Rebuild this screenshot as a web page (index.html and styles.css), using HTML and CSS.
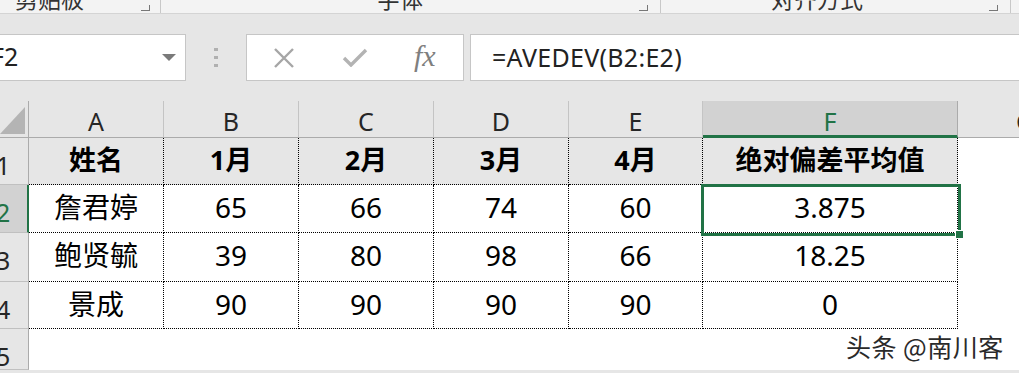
FILE: index.html
```html
<!DOCTYPE html>
<html lang="zh-CN">
<head>
<meta charset="utf-8">
<link rel="stylesheet" href="styles.css">
</head>
<body>
<div class="app">
  <div class="ribbon">
    <div class="group g1"><span class="glabel">剪贴板</span><span class="launch"></span></div>
    <div class="group g2"><span class="glabel">字体</span><span class="launch"></span></div>
    <div class="group g3"><span class="glabel">对齐方式</span><span class="launch"></span></div>
  </div>
  <div class="fbar">
    <div class="namebox"><span class="nametext">F2</span><span class="dd"></span></div>
    <div class="grip"><i></i><i></i><i></i></div>
    <div class="btns">
      <svg class="ico" width="24" height="20" viewBox="0 0 24 20"><path d="M3 1 L21 19 M21 1 L3 19" stroke="#a6a6a6" stroke-width="2.4" fill="none"/></svg>
      <svg class="ico" width="26" height="20" viewBox="0 0 26 20"><path d="M2 11 L9 18 L24 3" stroke="#b3b3b3" stroke-width="3.4" fill="none"/></svg>
      <span class="fx">fx</span>
    </div>
    <div class="formula">=AVEDEV(B2:E2)</div>
  </div>
  <div class="sheet">
    <div class="corner"><span class="tri"></span></div>
    <div class="ch">A</div><div class="ch">B</div><div class="ch">C</div><div class="ch">D</div><div class="ch">E</div><div class="ch sel">F</div><div class="ch last">G</div>

    <div class="rh">1</div>
    <div class="c h">姓名</div><div class="c h">1月</div><div class="c h">2月</div><div class="c h">3月</div><div class="c h">4月</div><div class="c h">绝对偏差平均值</div><div class="e"></div>

    <div class="rh selr">2</div>
    <div class="c">詹君婷</div><div class="c">65</div><div class="c">66</div><div class="c">74</div><div class="c">60</div><div class="c">3.875</div><div class="e"></div>

    <div class="rh">3</div>
    <div class="c">鲍贤毓</div><div class="c">39</div><div class="c">80</div><div class="c">98</div><div class="c">66</div><div class="c">18.25</div><div class="e"></div>

    <div class="rh">4</div>
    <div class="c">景成</div><div class="c">90</div><div class="c">90</div><div class="c">90</div><div class="c">90</div><div class="c">0</div><div class="e"></div>

    <div class="rh">5</div>
    <div class="e"></div><div class="e"></div><div class="e"></div><div class="e"></div><div class="e"></div><div class="e"></div><div class="e"></div>

    <div class="selbox"><span class="handle"></span></div>
    <div class="mark">头条 @南川客</div>
  </div>
</div>
</body>
</html>
```
FILE: styles.css
```css
* { box-sizing: border-box; }
html, body { margin: 0; padding: 0; }
body {
  width: 1019px; height: 373px; overflow: hidden;
  background: #e6e6e6;
  font-family: "Noto Sans", "Noto Sans CJK SC", sans-serif;
}
.app { width: 1019px; height: 373px; overflow: hidden; }

.ribbon {
  height: 14px; background: #f3f3f3;
  border-bottom: 1px solid #d4d4d4;
  display: flex; overflow: hidden;
}
.group { position: relative; height: 13px; border-right: 1px solid #c8c8c8; overflow: hidden; }
.g1 { width: 161px; }
.g2 { width: 500px; }
.g3 { width: 350px; }
.glabel {
  position: absolute; top: -14px;
  font-family: "Noto Sans CJK SC", sans-serif;
  font-size: 23px; line-height: 24px; color: #333;
}
.g1 .glabel { left: 15px; }
.g2 .glabel { left: 216px; }
.g3 .glabel { left: 110px; }
.launch {
  position: absolute; bottom: 2px; width: 9px; height: 6px;
  border-right: 1px solid #777; border-bottom: 1px solid #777;
}
.g1 .launch { right: 10px; }
.g2 .launch { right: 12px; }
.g3 .launch { right: 12px; }

.fbar {
  margin-top: 20px; height: 47px;
  display: flex; align-items: stretch;
}
.namebox {
  width: 187px; margin-left: -1px; background: #fff;
  border: 1px solid #c6c6c6; position: relative; overflow: hidden;
}
.nametext {
  position: absolute; left: -9px; top: 6px;
  font-size: 25px; line-height: 30px; color: #222;
}
.dd {
  position: absolute; left: 162px; top: 19px;
  border-left: 7px solid transparent; border-right: 7px solid transparent;
  border-top: 7px solid #7a7a7a;
}
.grip {
  width: 60px; display: flex; flex-direction: column; align-items: center;
  justify-content: center; gap: 5px;
}
.grip i { display: block; width: 4px; height: 3px; background: #b0b0b0; }
.btns {
  width: 218px; background: #fff; border: 1px solid #c6c6c6;
  display: flex; align-items: center; padding-left: 25px;
}
.btns .ico:nth-child(1) { margin-right: 46px; }
.btns .ico:nth-child(2) { margin-right: 46px; margin-top: -2px; }
.fx {
  font-family: "Liberation Serif", "DejaVu Serif", serif; font-style: italic;
  font-size: 30px; color: #7f7f7f; line-height: 30px; margin-top: -4px;
}
.formula {
  flex: 1; margin-left: 6px; background: #fff; border: 1px solid #c6c6c6;
  border-right: none;
  font-size: 25px; line-height: 44px; padding-left: 21px; color: #222;
  letter-spacing: 0.3px;
}

.sheet {
  position: relative;
  margin-top: 20px;
  display: grid;
  grid-template-columns: 29px 135px 135px 135px 135px 134px 255px 1fr;
  grid-template-rows: 37px 47px 48px 49px 47px 41px;
  background: #fff;
}
.corner { background: #e6e6e6; border-right: 1px solid #ababab; border-bottom: 1px solid #ababab; position: relative; }
.tri {
  position: absolute; right: 3px; bottom: 3px;
  border-left: 25px solid transparent; border-bottom: 27px solid #b4b4b4;
}
.ch {
  background: #e6e6e6; border-right: 1px solid #c4c4c4; border-bottom: 1px solid #ababab;
  text-align: center; font-size: 25px; line-height: 40px; color: #262626;
}
.ch.sel { background: #d2d2d2; color: #217346; border-bottom: 3px solid #217346; border-right-color: #ababab; }
.ch.last { border-right: none; text-align: left; padding-left: 58px; overflow: hidden; white-space: nowrap; }
.rh {
  background: #e6e6e6; border-right: 1px solid #ababab; border-bottom: 1px solid #c0c0c0;
  font-size: 25px; line-height: 34px; padding-top: 10px; color: #262626;
  text-indent: -4px; overflow: hidden;
}
.rh.selr { background: #d2d2d2; color: #217346; border-right: 2px solid #217346; }
.c {
  border-right: 1px dotted #000; border-bottom: 1px dotted #000;
  text-align: center; font-size: 28px; line-height: 44px; color: #000;
  font-family: "Noto Sans", "Noto Sans CJK SC", sans-serif;
}
.c.h { background: #e6e6e6; font-weight: bold; font-size: 27px; }
.e { background: #fff; }

.selbox {
  position: absolute; left: 701px; top: 83px; width: 260px; height: 52px;
  border: 3px solid #217346;
}
.handle {
  position: absolute; right: -6px; bottom: -6px; width: 9px; height: 9px;
  background: #217346; border: 1px solid #fff;
}
.mark {
  position: absolute; left: 846px; top: 227px;
  font-family: "Noto Sans CJK SC", sans-serif; font-size: 25px; color: #2a2a2a;
  text-shadow: 0 0 2px #fff, 0 0 2px #fff;
  white-space: nowrap; letter-spacing: 0.5px;
}
```
